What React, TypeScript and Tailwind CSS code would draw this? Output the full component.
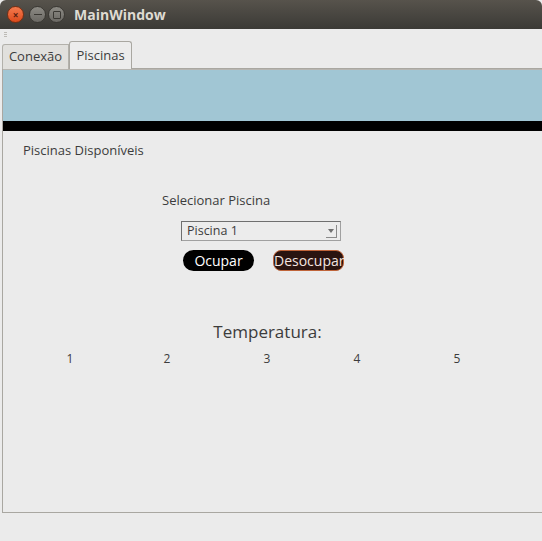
import React from 'react'

const font = { fontFamily: '"Open Sans", "DejaVu Sans", sans-serif' }

const TitleBar = () => (
  <div className="flex h-[29px] items-center rounded-t-[6px] bg-gradient-to-b from-[#57534c] to-[#3b3a36] pl-[7px]">
    <div className="flex h-[17px] w-[17px] items-center justify-center rounded-full border border-[#7a2f12] bg-gradient-to-b from-[#f47a4d] to-[#dc4a1a]">
      <span className="text-[10px] leading-none font-bold text-[#5a2010]">×</span>
    </div>
    <div className="ml-[5px] flex h-[17px] w-[17px] items-center justify-center rounded-full border border-[#3a3833] bg-gradient-to-b from-[#8c8a84] to-[#6b6964]">
      <div className="h-[1.5px] w-[8px] bg-[#3a3833]" />
    </div>
    <div className="ml-[2px] flex h-[17px] w-[17px] items-center justify-center rounded-full border border-[#3a3833] bg-gradient-to-b from-[#8c8a84] to-[#6b6964]">
      <div className="h-[8px] w-[8px] rounded-[1px] border border-[#3a3833]" />
    </div>
    <span className="ml-[9px] text-[14px] font-bold text-[#dfdbd2]">MainWindow</span>
  </div>
)

const Tabs = () => (
  <div className="flex h-[29px] items-end">
    <div className="ml-[2px] flex h-[25px] w-[67px] items-center justify-center rounded-tl-[3px] border border-b-0 border-[#b3b1ab] bg-[#e1e0dd] text-[13px] text-[#3c3c3c]">
      Conexão
    </div>
    <div className="flex h-[28px] w-[63px] items-center justify-center rounded-t-[3px] border border-b-0 border-[#a9a7a1] bg-[#ececec] text-[13px] text-[#3c3c3c]">
      Piscinas
    </div>
    <div className="h-[1px] flex-1 bg-[#a9a7a1]" />
  </div>
)

// column labels under "Temperatura:"
const Temps = () => (
  <div className="flex pl-[57px] text-[12px] text-[#3c3c3c]">
    <span className="w-[20px] text-center">1</span>
    <span className="ml-[77px] w-[20px] text-center">2</span>
    <span className="ml-[80px] w-[20px] text-center">3</span>
    <span className="ml-[70px] w-[20px] text-center">4</span>
    <span className="ml-[80px] w-[20px] text-center">5</span>
  </div>
)

const App = () => {
  return (
    <div className="flex h-[541px] w-[542px] flex-col overflow-hidden bg-[#ebebeb]" style={font}>
      <TitleBar />
      <div className="flex h-[11px] items-center pl-[4px]">
        <div className="flex flex-col gap-[1px]">
          <div className="h-[1px] w-[3px] bg-[#bdbbb6]" />
          <div className="h-[1px] w-[3px] bg-[#bdbbb6]" />
          <div className="h-[1px] w-[3px] bg-[#bdbbb6]" />
        </div>
      </div>
      <Tabs />
      <div className="ml-[2px] flex h-[444px] flex-col border-b border-l border-[#a9a7a1]">
        <div className="h-[52px] border-t border-[#b7b5b0] bg-[#a1c6d4]" />
        <div className="h-[10px] bg-black" />
        <div className="pl-[20px] pt-[10px] text-[13px] text-[#3c3c3c]">Piscinas Disponíveis</div>
        <div className="mt-[30px] pl-[159px] text-[13px] text-[#3c3c3c]">Selecionar Piscina</div>
        <div className="mt-[11px] ml-[178px] flex h-[20px] w-[160px] items-center justify-between border border-t-[#6f6f6f] border-l-[#6f6f6f] border-r-[#a0a0a0] border-b-[#a0a0a0] bg-[#ececec] pl-[5px] pr-[3px] text-[12.5px] text-[#3c3c3c]">
          <span>Piscina 1</span>
          <div className="flex h-[13px] w-[11px] items-center justify-center border-b border-r border-[#8a8a8a]">
            <div className="h-0 w-0 border-x-[3px] border-t-[4px] border-x-transparent border-t-[#707070]" />
          </div>
        </div>
        <div className="mt-[9px] ml-[180px] flex gap-[19px]">
          <div className="flex h-[21px] w-[71px] items-center justify-center rounded-full bg-black text-[14px] text-white">
            Ocupar
          </div>
          <div className="flex h-[21px] w-[71px] items-center rounded-[8px] border border-[#c0653a] bg-[#2a1410] text-[14px] whitespace-nowrap text-[#f5e6e0]">
            Desocupar
          </div>
        </div>
        <div className="mt-[48px] pr-[10px] text-center text-[17px] text-[#3c3c3c]">Temperatura:</div>
        <div className="mt-[5px]">
          <Temps />
        </div>
      </div>
    </div>
  )
}

export default App
